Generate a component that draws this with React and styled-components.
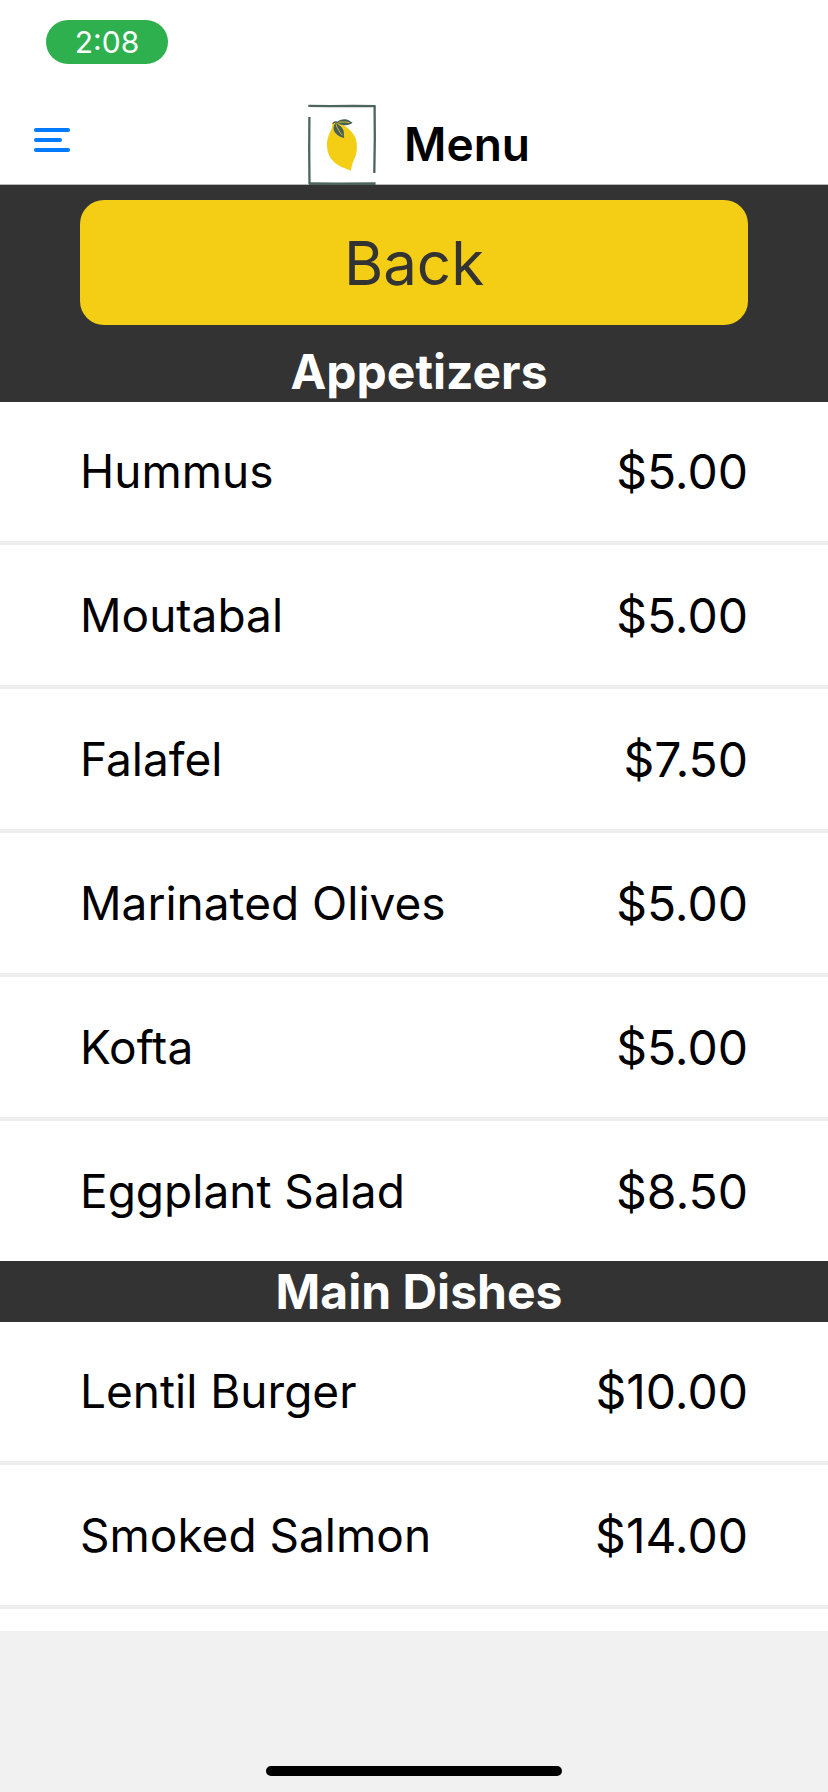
import React from "react";
import styled, { createGlobalStyle } from "styled-components";

const GlobalStyle = createGlobalStyle`
  *, *::before, *::after { box-sizing: border-box; }
  body {
    margin: 0;
    background: #fff;
    color: #000;
    font-family: Inter, "Liberation Sans", sans-serif;
  }
`;

const Screen = styled.div`
  display: flex;
  flex-direction: column;
  min-height: 100vh;
`;

const Header = styled.header`
  background: #fff;
  box-shadow: inset 0 -1px 0 #b8b8b8;
`;

const StatusBar = styled.div`
  display: flex;
  height: 104px;
  padding: 20px 46px;
`;

const Clock = styled.time`
  width: 122px;
  height: 44px;
  border-radius: 22px;
  background: #2eb04f;
  color: #fff;
  font-size: 30px;
  line-height: 44px;
  text-align: center;
`;

const NavBar = styled.nav`
  display: grid;
  grid-template-columns: 1fr auto 1fr;
  padding: 0 24px 0 34px;
`;

const MenuButton = styled.button`
  justify-self: start;
  align-self: start;
  margin-top: 24px;
  padding: 0;
  border: 0;
  background: none;
  cursor: pointer;

  svg { display: block; }
`;

const Brand = styled.div`
  display: flex;
  gap: 28px;

  svg { display: block; }
`;

const Title = styled.h1`
  margin: 0;
  font-size: 46px;
  font-weight: 600;
  line-height: 80px;
`;

const Main = styled.main`
  flex: 1;
`;

const BackPanel = styled.div`
  padding: 15px 80px 16px;
  background: #333;
`;

const BackButton = styled.button`
  display: block;
  width: 100%;
  height: 125px;
  padding: 0;
  border: 0;
  border-radius: 24px;
  background: #f4ce14;
  color: #333;
  font: inherit;
  font-size: 60px;
  cursor: pointer;
`;

const SectionTitle = styled.h2`
  margin: 0;
  padding: 2px 0 0 10px;
  background: #333;
  box-shadow: 0 1px 0 #333;
  color: #fff;
  font-size: 48px;
  font-weight: 700;
  line-height: 58px;
  text-align: center;
`;

const List = styled.ul`
  margin: 0;
  padding: 0;
  list-style: none;
`;

const Item = styled.li`
  display: flex;
  align-items: center;
  justify-content: space-between;
  height: 140px;
  padding: 0 80px;

  & + & {
    height: 144px;
    border-top: 4px solid #eee;
  }
`;

const Name = styled.span`
  font-size: 46px;
`;

const Price = styled.span`
  font-size: 48px;
`;

const LastRule = styled.hr`
  height: 4px;
  margin: 0;
  border: 0;
  background: #eee;
`;

const Footer = styled.footer`
  display: flex;
  align-items: flex-end;
  justify-content: center;
  height: 161px;
  padding-bottom: 16px;
  background: #f1f1f1;
`;

const HomeIndicator = styled.div`
  width: 296px;
  height: 10px;
  border-radius: 5px;
  background: #000;
`;

const sections = [
  {
    title: "Appetizers",
    items: [
      ["Hummus", "$5.00"],
      ["Moutabal", "$5.00"],
      ["Falafel", "$7.50"],
      ["Marinated Olives", "$5.00"],
      ["Kofta", "$5.00"],
      ["Eggplant Salad", "$8.50"],
    ],
  },
  {
    title: "Main Dishes",
    items: [
      ["Lentil Burger", "$10.00"],
      ["Smoked Salmon", "$14.00"],
    ],
  },
];

function LinesIcon() {
  return (
    <svg width="36" height="24" viewBox="0 0 36 24" fill="#007aff" aria-hidden="true">
      <rect width="36" height="4" rx="2" />
      <rect y="10" width="28" height="4" rx="2" />
      <rect y="20" width="36" height="4" rx="2" />
    </svg>
  );
}

function LemonLogo() {
  return (
    <svg width="68" height="81" viewBox="0 0 68 81" fill="none" aria-hidden="true">
      <g stroke="#4d655d" strokeWidth="2.3">
        <path d="M0.3 1.9 L22 2.2 L45 2 L67.6 2.2" />
        <path d="M66.6 2 L66.8 35 L66.3 69" />
        <path d="M1.4 13 L1.2 45 L1.5 80" />
        <path d="M1 79.6 L30 79.9 L67.6 79.6" strokeWidth="2.8" />
      </g>
      <path
        fill="#f4ce14"
        d="M25 18.5C27 17 31 18 33.5 19.8C37 22 43 26 46 31C48.5 35 49.4 41 48.7 47C48 53 45 57 44 61C43.5 63.5 43.3 65.5 42.4 66.7C40.5 66 38.5 64.6 35.5 63.8C30.5 62 24.5 57.5 22 53C19.5 49 18.5 42 19.2 37C19.8 31.5 22.5 28 23.8 24C24.4 22 23.8 20 25 18.5Z"
      />
      <path fill="#465f58" d="M28.5 18.4C31 15.8 35 14.9 38.5 15.4C41 15.8 42 17.6 44.6 18.5C42.5 20.8 38.5 21.8 34.5 21C32 20.5 30.2 19.4 28.5 18.4Z" />
      <path fill="#465f58" d="M27.5 19C30.5 20 34.5 23 35.6 26.8C36.2 29 35.6 31 36.2 33.9C33 33.2 29.3 31.5 27 28.4C24.8 25.3 25.3 21.5 27.5 19Z" />
      <path stroke="#d9bd2f" strokeWidth="1" d="M30.5 18.3C34 17.8 38 18 41.5 18.6M28 20.5C29.5 24.5 31.5 28.5 34.5 31.3" />
      <path stroke="#465f58" strokeWidth="1.4" d="M24.6 19.6C26 17.8 28 17.8 30 18.6" />
    </svg>
  );
}

export default function App() {
  return (
    <Screen>
      <GlobalStyle />
      <Header>
        <StatusBar>
          <Clock>2:08</Clock>
        </StatusBar>
        <NavBar>
          <MenuButton type="button" aria-label="Open navigation">
            <LinesIcon />
          </MenuButton>
          <Brand>
            <LemonLogo />
            <Title>Menu</Title>
          </Brand>
        </NavBar>
      </Header>
      <Main>
        <BackPanel>
          <BackButton type="button">Back</BackButton>
        </BackPanel>
        {sections.map((section) => (
          <section key={section.title}>
            <SectionTitle>{section.title}</SectionTitle>
            <List>
              {section.items.map(([name, price]) => (
                <Item key={name}>
                  <Name>{name}</Name>
                  <Price>{price}</Price>
                </Item>
              ))}
            </List>
          </section>
        ))}
        <LastRule />
      </Main>
      <Footer>
        <HomeIndicator />
      </Footer>
    </Screen>
  );
}
